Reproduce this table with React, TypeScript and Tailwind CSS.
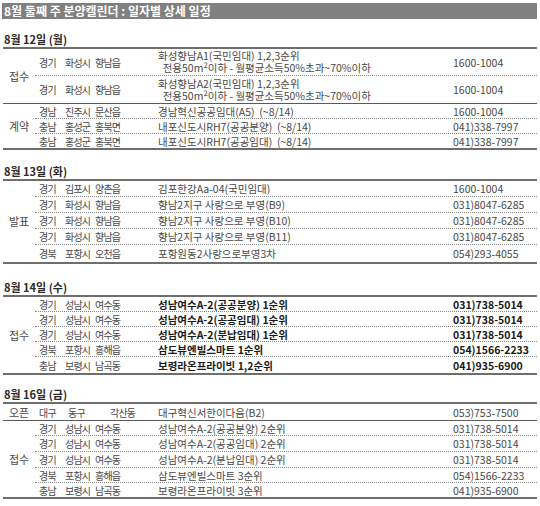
import React from 'react'

type Row = {
  prov: string
  city: string
  dist: string
  name: React.ReactNode
  phone: string
  h: string
}

type Group = {
  cat: string
  rows: Row[]
  solid: 'mid' | 'end'
  bold?: boolean
}

const FONT = "font-['Noto_Sans_CJK_KR','Liberation_Sans',sans-serif]"

const line2 = (a: string, b: string) => (
  <span className="block leading-[12px]">
    {a}
    <br />
    {'  ' + b}
  </span>
)

const S1: Group[] = [
  {
    cat: '접수',
    solid: 'mid',
    rows: [
      { prov: '경기', city: '화성시', dist: '향남읍', name: line2('화성향남A1(국민임대) 1,2,3순위', '전용50m²이하 - 월평균소득50%초과~70%이하'), phone: '1600-1004', h: 'h-[27px]' },
      { prov: '경기', city: '화성시', dist: '향남읍', name: line2('화성향남A2(국민임대) 1,2,3순위', '전용50m²이하 - 월평균소득50%초과~70%이하'), phone: '1600-1004', h: 'h-[27px]' },
    ],
  },
  {
    cat: '계약',
    solid: 'end',
    rows: [
      { prov: '경남', city: '진주시', dist: '문산읍', name: '경남혁신공공임대(A5)  (~8/14)', phone: '1600-1004', h: 'h-[15px]' },
      { prov: '충남', city: '홍성군', dist: '홍북면', name: '내포신도시RH7(공공분양)  (~8/14)', phone: '041)338-7997', h: 'h-[15px]' },
      { prov: '충남', city: '홍성군', dist: '홍북면', name: '내포신도시RH7(공공임대)  (~8/14)', phone: '041)338-7997', h: 'h-[14px]' },
    ],
  },
]

const S2: Group[] = [
  {
    cat: '발표',
    solid: 'end',
    rows: [
      { prov: '경기', city: '김포시', dist: '양촌읍', name: '김포한강Aa-04(국민임대)', phone: '1600-1004', h: 'h-[16px]' },
      { prov: '경기', city: '화성시', dist: '향남읍', name: '향남2지구 사랑으로 부영(B9)', phone: '031)8047-6285', h: 'h-[16px]' },
      { prov: '경기', city: '화성시', dist: '향남읍', name: '향남2지구 사랑으로 부영(B10)', phone: '031)8047-6285', h: 'h-[16px]' },
      { prov: '경기', city: '화성시', dist: '향남읍', name: '향남2지구 사랑으로 부영(B11)', phone: '031)8047-6285', h: 'h-[16px]' },
      { prov: '경북', city: '포항시', dist: '오천읍', name: '포항원동2사랑으로부영3차', phone: '054)293-4055', h: 'h-[17px]' },
    ],
  },
]

const S3: Group[] = [
  {
    cat: '접수',
    solid: 'end',
    bold: true,
    rows: [
      { prov: '경기', city: '성남시', dist: '여수동', name: '성남여수A-2(공공분양) 1순위', phone: '031)738-5014', h: 'h-[15px]' },
      { prov: '경기', city: '성남시', dist: '여수동', name: '성남여수A-2(공공임대) 1순위', phone: '031)738-5014', h: 'h-[15px]' },
      { prov: '경기', city: '성남시', dist: '여수동', name: '성남여수A-2(분납임대) 1순위', phone: '031)738-5014', h: 'h-[15px]' },
      { prov: '경북', city: '포항시', dist: '흥해읍', name: '삼도뷰엔빌스마트 1순위', phone: '054)1566-2233', h: 'h-[15px]' },
      { prov: '충남', city: '보령시', dist: '남곡동', name: '보령라온프라이빗 1,2순위', phone: '041)935-6900', h: 'h-[16px]' },
    ],
  },
]

const S4: Group[] = [
  {
    cat: '접수',
    solid: 'end',
    rows: [
      { prov: '경기', city: '성남시', dist: '여수동', name: '성남여수A-2(공공분양) 2순위', phone: '031)738-5014', h: 'h-[15px]' },
      { prov: '경기', city: '성남시', dist: '여수동', name: '성남여수A-2(공공임대) 2순위', phone: '031)738-5014', h: 'h-[16px]' },
      { prov: '경기', city: '성남시', dist: '여수동', name: '성남여수A-2(분납임대) 2순위', phone: '031)738-5014', h: 'h-[16px]' },
      { prov: '경북', city: '포항시', dist: '흥해읍', name: '삼도뷰엔빌스마트 3순위', phone: '054)1566-2233', h: 'h-[15px]' },
      { prov: '충남', city: '보령시', dist: '남곡동', name: '보령라온프라이빗 3순위', phone: '041)935-6900', h: 'h-[14px]' },
    ],
  },
]

const LOC = 'text-[10px] tracking-[-0.8px] text-[#484848]'

function GroupBlock({ g }: { g: Group }) {
  const txt = g.bold ? 'text-[#1a1a1a] font-bold' : 'text-[#484848]'
  return (
    <div className={`flex ${g.solid === 'mid' ? 'border-b border-[#5a5a5a]' : 'border-b-2 border-[#6e6e6e]'}`}>
      <div className="w-[32px] shrink-0 flex items-center justify-center text-[11px] text-[#484848]">{g.cat}</div>
      <div className="flex-1 flex flex-col">
        {g.rows.map((r, i) => (
          <div
            key={i}
            className={`${r.h} grid grid-cols-[27px_30px_63px_295px_1fr] items-center leading-[13px] whitespace-nowrap ${
              i < g.rows.length - 1 ? 'border-b border-dotted border-[#8a8a8a]' : ''
            }`}
          >
            <span className={`pl-[4px] ${LOC}`}>{r.prov}</span>
            <span className={`pl-[3px] ${LOC}`}>{r.city}</span>
            <span className={`pl-[3px] ${LOC}`}>{r.dist}</span>
            <span className={`pl-[3px] whitespace-pre ${txt}`}>{r.name}</span>
            <span className={`pl-[3px] ${txt}`}>{r.phone}</span>
          </div>
        ))}
      </div>
    </div>
  )
}

function Heading({ text, mt }: { text: string; mt: string }) {
  return (
    <div className={`${mt} h-[16px] leading-[16px] text-[11px] font-bold text-[#2a2a2a] pl-[1px]`}>{text}</div>
  )
}

export default function App() {
  return (
    <div className={`w-[540px] h-[506px] bg-white px-[3px] text-[10.5px] ${FONT}`}>
      <div className="mt-[3px] -ml-[1px] h-[16px] bg-[#808080] text-white text-[12px] font-bold leading-[16px] pl-[2px]">
        8월 둘째 주 분양캘린더 : 일자별 상세 일정
      </div>

      <Heading text="8월 12일 (월)" mt="mt-[12px]" />
      <div className="border-t-2 border-[#6e6e6e]">
        {S1.map((g, i) => (
          <GroupBlock key={i} g={g} />
        ))}
      </div>

      <Heading text="8월 13일 (화)" mt="mt-[13px]" />
      <div className="border-t-2 border-[#6e6e6e]">
        {S2.map((g, i) => (
          <GroupBlock key={i} g={g} />
        ))}
      </div>

      <Heading text="8월 14일 (수)" mt="mt-[15px]" />
      <div className="border-t-2 border-[#6e6e6e]">
        {S3.map((g, i) => (
          <GroupBlock key={i} g={g} />
        ))}
      </div>

      <Heading text="8월 16일 (금)" mt="mt-[11px]" />
      <div className="border-t-2 border-[#6e6e6e]">
        <div className="h-[17px] flex items-center border-b border-[#5a5a5a] leading-[13px] whitespace-nowrap">
          <span className="w-[32px] text-center text-[11px] text-[#484848]">오픈</span>
          <span className={`w-[27px] pl-[4px] ${LOC}`}>대구</span>
          <span className={`w-[30px] pl-[6px] ${LOC}`}>동구</span>
          <span className={`w-[63px] pl-[18px] ${LOC}`}>각산동</span>
          <span className="w-[295px] pl-[3px] text-[#484848]">대구혁신서한이다음(B2)</span>
          <span className="pl-[3px] text-[#484848]">053)753-7500</span>
        </div>
        {S4.map((g, i) => (
          <GroupBlock key={i} g={g} />
        ))}
      </div>
    </div>
  )
}
